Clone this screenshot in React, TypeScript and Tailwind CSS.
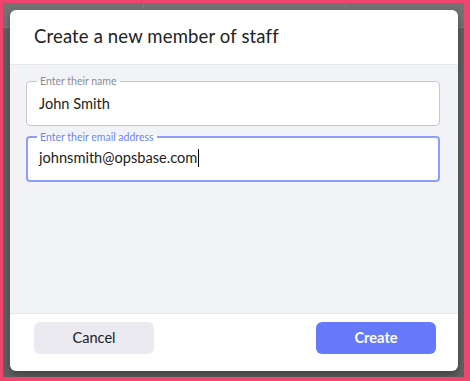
import React from "react";

export default function App() {
  return (
    <div className="w-[470px] h-[381px] bg-[#ee446d] pt-[3px] pl-[3px] pr-[6px] pb-[4px]" style={{ fontFamily: "Lato, 'Open Sans', sans-serif" }}>
      <div className="relative w-full h-full bg-[#616264] overflow-hidden">
        <div className="absolute left-0 right-0 top-0 h-[25px] bg-[#737373] border-b border-[#7d7d7d]" />
        <div className="absolute top-0 h-[25px] left-[140px] w-px bg-[#7e7e7e]" />
        <div className="absolute top-0 h-[25px] left-[342px] w-px bg-[#7e7e7e]" />
        <div className="relative ml-[7px] mt-[7px] w-[448px] h-[361px] bg-white rounded-[6px] flex flex-col overflow-hidden shadow-[0_4px_8px_rgba(0,0,0,0.35)]">
          <div className="h-[55px] shrink-0 flex items-center pl-[24px] border-b border-[#e6e7ec]">
            <span className="text-[18.5px] text-[#222] tracking-[0.15px]">Create a new member of staff</span>
          </div>
          <div className="flex-1 bg-[#f2f3f7] pl-[16px] pr-[18px] pt-[11px] flex flex-col gap-[6px]">
            <fieldset className="h-[50px] border border-[#c4c6cc] rounded-[4px] bg-white px-[10px] pb-[6px]">
              <legend className="px-[3px] text-[10.5px] text-[#8b8c93] leading-[10px]">Enter their name</legend>
              <div className="pl-[2px] pt-[7px] text-[14.6px] text-[#222]">John Smith</div>
            </fieldset>
            <fieldset className="h-[50px] border-2 border-[#8d9ef9] rounded-[4px] bg-white px-[9px] pb-[6px]">
              <legend className="px-[3px] text-[10.5px] text-[#6b80f6] leading-[10px]">Enter their email address</legend>
              <div className="pl-[2px] pt-[5px] text-[14.6px] text-[#222] flex items-center">
                <span>johnsmith@opsbase.com</span>
                <span className="inline-block w-px h-[18px] bg-black ml-[1px]" />
              </div>
            </fieldset>
          </div>
          <div className="h-[58px] shrink-0 border-t border-[#e6e7ec] flex items-start pt-[8px] justify-between pl-[24px] pr-[22px]">
            <button className="w-[120px] h-[32px] rounded-[6px] bg-[#ebeaf0] text-[14.6px] text-[#222]">Cancel</button>
            <button className="w-[120px] h-[32px] rounded-[6px] bg-[#6579fa] text-[14.6px] font-bold text-white">Create</button>
          </div>
        </div>
      </div>
    </div>
  );
}
